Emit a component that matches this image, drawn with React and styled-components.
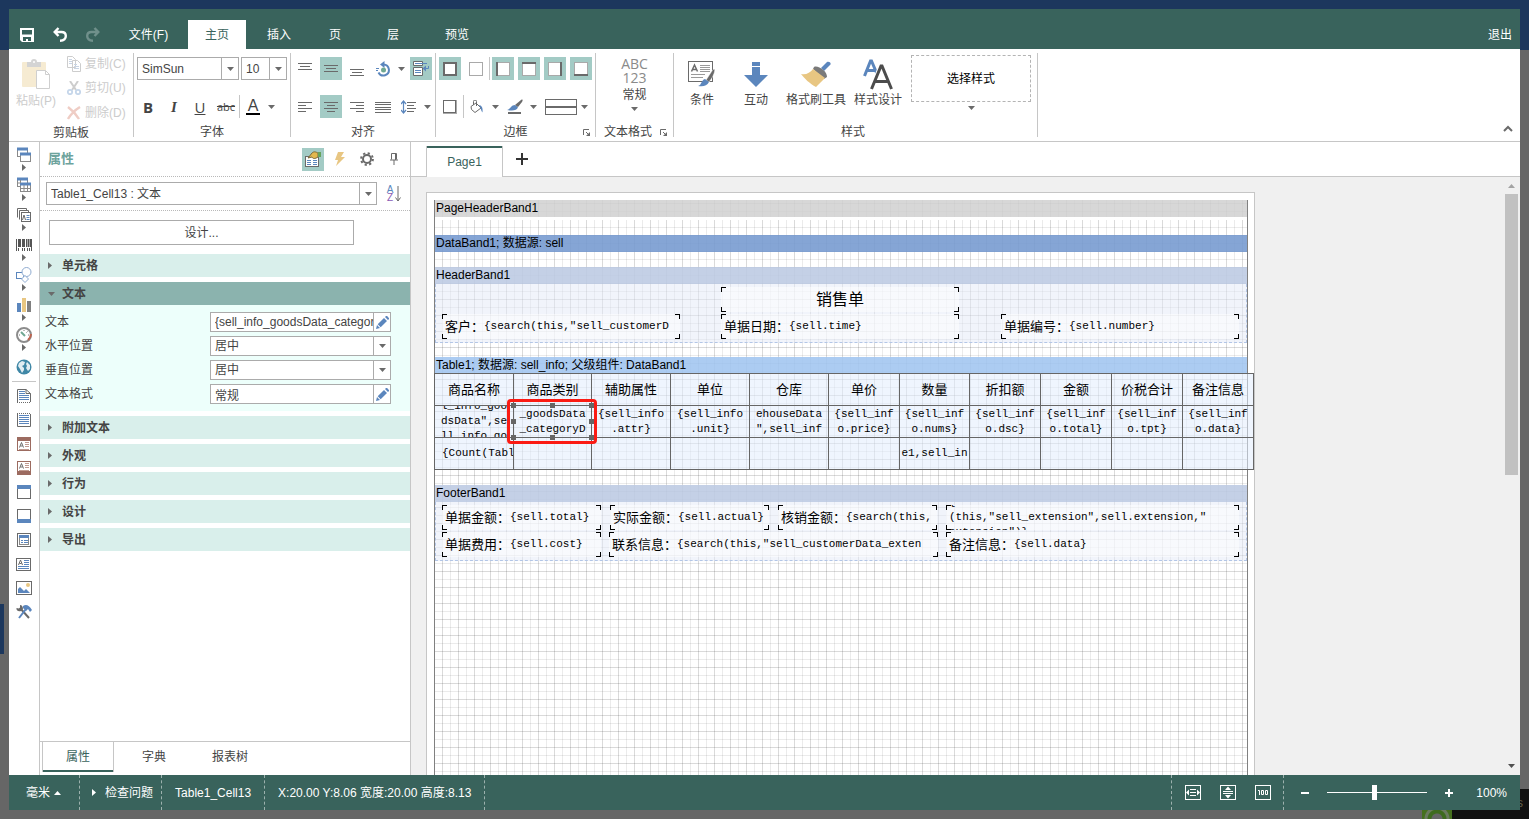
import React from 'react'
import styled, { createGlobalStyle, css } from 'styled-components'

const GREEN = '#39635c'
const ACTIVE = '#a3cbc5'
const LINE = '#c6c6c6'
const INK = '#444444'
const ICON = '#6a6a6a'
const BLUE = '#5b86bd'

/* ---------- icons ---------- */

const Svg = ({ w = 16, h = 16, children }) => (
  <svg width={w} height={h} viewBox={`0 0 ${w} ${h}`} fill="none" aria-hidden="true">
    {children}
  </svg>
)

const Caret = ({ dir = 'down', color = ICON }) => {
  const shape = {
    down: 'M0 0h7L3.500 4z',
    up: 'M0 4h7L3.500 0z',
    right: 'M0 0v7L4 3.500z',
  }[dir]
  const side = dir === 'right'
  return (
    <Svg w={side ? 4 : 7} h={side ? 7 : 4}>
      <path d={shape} fill={color} />
    </Svg>
  )
}

const SaveIcon = () => (
  <Svg w={14} h={14}>
    <path d="M0 0h14v14H2L0 12z" fill="#fff" />
    <path d="M2 2h10v4.500H2zM3 9h8v4H8v-2H6v2H3z" fill={GREEN} />
  </Svg>
)

const UndoIcon = ({ color = '#fff', flip }) => (
  <Svg w={14} h={15}>
    <g transform={flip ? 'translate(14 0) scale(-1 1)' : undefined} stroke={color} strokeWidth="2.400">
      <path d="M5.500 1L1.700 5L5.500 9M2 5H8.500C11.500 5 12.800 7 12.800 9C12.800 11.800 11 13.500 7 13.700" />
    </g>
  </Svg>
)

const PasteIcon = () => (
  <Svg w={28} h={30}>
    <rect y="3" width="24" height="25" rx="1" fill="#f6ebd2" />
    <path d="M5 3h4c0-2 1-3 3-3s3 1 3 3h4v5H5z" fill="#d4d4d4" />
    <circle cx="12" cy="3" r="1" fill="#fff" />
    <path d="M14.500 11.500h9l4 4v14h-13z" fill="#fff" stroke="#cfcfcf" />
    <path d="M23.500 11.500v4h4" stroke="#cfcfcf" />
  </Svg>
)

const CopyIcon = () => (
  <Svg w={14} h={16}>
    <path d="M.5.5h5l3 3v8h-8zM5.500 4.500h5l3 3v8h-8z" fill="#fff" stroke="#cdcdcd" />
    <path d="M2 3.500h3M2 5.500h3M2 7.500h3M7 8.500h3M7 10.500h5M7 12.500h5" stroke="#c8d4e4" />
  </Svg>
)

const CutIcon = () => (
  <Svg w={14} h={14}>
    <path d="M3 0l6 9M11 0L5 9" stroke="#cdcdcd" strokeWidth="2" />
    <circle cx="3" cy="11" r="2.200" stroke="#c5d6ea" strokeWidth="1.800" />
    <circle cx="11" cy="11" r="2.200" stroke="#c5d6ea" strokeWidth="1.800" />
  </Svg>
)

const DeleteIcon = () => (
  <Svg w={14} h={14}>
    <path d="M1 1c4 3 8 7 11 12M13 1C8 4 4 8 1 13" stroke="#efcdc5" strokeWidth="2.400" />
  </Svg>
)

const LinesIcon = ({ rows, h = 14 }) => (
  <Svg w={16} h={h}>
    {rows.map(([x1, x2, y]) => (
      <path key={y} d={`M${x1} ${y + 0.5}H${x2}`} stroke={ICON} />
    ))}
  </Svg>
)

const RotateIcon = () => (
  <Svg w={16} h={16}>
    <path d="M8.500 3.500a5.500 5.500 0 1 1-5 8" stroke={BLUE} strokeWidth="2" />
    <path d="M9.500 0v7L5 3.500z" fill={BLUE} />
    <circle cx="8.500" cy="9" r="2.500" fill="#6fa892" />
    <path d="M1 7.500h3M1 9.500h2" stroke={BLUE} />
  </Svg>
)

const WrapIcon = () => (
  <Svg w={16} h={16}>
    <path d="M.5.500h9v4h-9zM.5 6.500h9v8h-9z" fill="#fff" stroke={ICON} />
    <path d="M2 2.500h12M2 9.500h6M2 11.500h6" stroke={BLUE} />
    <path d="M15.500 5v2.500H11" stroke={BLUE} />
    <path d="M13 4.500v6l-3.500-3z" fill={BLUE} />
  </Svg>
)

const SpacingIcon = () => (
  <Svg w={16} h={14}>
    <path d="M2.500 1v12M0 4l2.500-3L5 4M0 10l2.500 3L5 10" stroke={BLUE} strokeWidth="1.200" />
    <path d="M6 2.500h9M6 5.500h7M6 8.500h9M6 11.500h7" stroke={ICON} />
  </Svg>
)

const BoxIcon = ({ side }) => (
  <Svg w={14} h={14}>
    <rect x=".5" y=".5" width="13" height="13" fill="#fff" stroke={side === 'all' ? ICON : '#a9a9a9'} />
    {side === 'all' && <rect x="1" y="1" width="12" height="12" stroke={ICON} strokeWidth="2" />}
    {side === 'left' && <path d="M1 0v14" stroke={ICON} strokeWidth="2" />}
    {side === 'top' && <path d="M0 1h14" stroke={ICON} strokeWidth="2" />}
    {side === 'right' && <path d="M13 0v14" stroke={ICON} strokeWidth="2" />}
    {side === 'bottom' && <path d="M0 13h14" stroke={ICON} strokeWidth="2" />}
    {side === 'shadow' && (
      <>
        <path d="M1 13h12V1" stroke="#a9a9a9" strokeWidth="2" />
        <rect x=".5" y=".5" width="12" height="12" fill="#fff" stroke={ICON} />
      </>
    )}
  </Svg>
)

const BucketIcon = () => (
  <Svg w={14} h={14}>
    <path d="M1 6.500l5-3.500 5 5-6 4.500-3.500-3zM3.500 5V1.500a1.500 1.500 0 0 1 3 0V6" stroke={ICON} />
    <path d="M9 5c3 .5 4 3 3.500 7.500C11 11 11 9 10.500 8z" fill={BLUE} />
  </Svg>
)

const PenIcon = () => (
  <Svg w={16} h={16}>
    <path d="M0 11c4-1 4-5 8-5l3 2c-1 4-6 4-11 3z" fill={BLUE} />
    <path d="M8 6l6-5c2-1 2 0 1 2l-4 5z" fill={ICON} />
    <path d="M1 14h13" stroke={ICON} strokeWidth="2" />
  </Svg>
)

const LineStyleIcon = () => (
  <Svg w={32} h={16}>
    <rect x=".5" y=".5" width="31" height="15" stroke={ICON} />
    <path d="M0 8h32" stroke={ICON} strokeWidth="2" />
  </Svg>
)

const LauncherIcon = () => (
  <Svg w={7} h={7}>
    <path d="M.5 6V.5H6M3 3l3 3" stroke={ICON} />
    <path d="M7 3v4H3z" fill={ICON} />
  </Svg>
)

const ConditionIcon = () => (
  <Svg w={28} h={28}>
    <rect x=".5" y="1.500" width="24" height="20" fill="#fff" stroke={ICON} />
    <path d="M3.500 11.500L6.500 5l3 6.500M4.500 9.500h4" stroke={ICON} strokeWidth="1.500" />
    <path d="M12 5.500h10M12 7.500h10M12 9.500h10M12 11.500h10M3 14.500h14M3 17.500h12" stroke="#9a9a9a" />
    <path d="M26 9c2 0 0 7-5 13l-3-2c3-4 6-10 8-11z" fill={ICON} stroke="#fff" strokeWidth=".5" />
    <path d="M17 19l4 3c-2 4-6 5-11 4 4-1 3-6 7-7z" fill={BLUE} />
  </Svg>
)

const InteractionIcon = () => (
  <Svg w={24} h={28}>
    <path d="M8 2h8v4H8zM8 7h8v8h8L12 27 0 15h8z" fill={BLUE} />
  </Svg>
)

const BrushIcon = () => (
  <Svg w={30} h={28}>
    <path d="M26 2c2-1 5 1 3 3l-6 6-3-3z" fill={BLUE} />
    <path d="M13 7c4-2 13 4 13 10l-3 2L12 9z" fill="#7a7a7a" />
    <path d="M12 9l12 9-9 9C9 24 3 18 0 14c5 1 9-1 12-5z" fill="#e8c682" />
  </Svg>
)

const StyleIcon = () => (
  <Svg w={30} h={32}>
    <path d="M1.500 18L7.500 3h1l6 14M4 12.500h8" stroke={BLUE} strokeWidth="3" />
    <path d="M8.500 31L18 8h1l9.500 23M12 24h13" stroke="#fff" strokeWidth="5" />
    <path d="M8.500 31L18 8h1l9.500 23M12 23.500h13" stroke="#4c4c4c" strokeWidth="3" />
  </Svg>
)

const Chevron = () => (
  <Svg w={10} h={7}>
    <path d="M1 6l4-4 4 4" stroke={ICON} strokeWidth="2" />
  </Svg>
)

const GridWindow = ({ cells }) => (
  <Svg>
    <rect x="1.500" y="1.500" width="10" height="8" fill="#fff" stroke="#8a8a8a" />
    <path d="M1 2h11" stroke={BLUE} strokeWidth="3" />
    <rect x="4.500" y="6.500" width="10" height="8" fill="#fff" stroke="#8a8a8a" />
    <path d="M4 7h11" stroke={BLUE} strokeWidth="3" />
    {cells && <path d="M1 6h3M4.500 3v3M5 11.500h10M8 8v7M11.500 8v7" stroke="#8a8a8a" />}
  </Svg>
)

const TextDocsIcon = () => (
  <Svg>
    <path d="M1.500 10.500v-9h9v2M3.500 12.500v-9h9v2" fill="#fff" stroke={ICON} />
    <rect x="5.500" y="5.500" width="9" height="9" fill="#fff" stroke={ICON} />
    <path d="M6.500 13l1.500-5 1.500 5" stroke={ICON} />
    <path d="M10.500 8.500h3M10.500 10.500h3M10.500 12.500h3" stroke={BLUE} />
  </Svg>
)

const BarcodeIcon = () => (
  <Svg>
    <path d="M.5 2v12M15.500 2v12" stroke="#555" />
    <path d="M4 2v8M8 2v8M12.500 2v8" stroke="#555" strokeWidth="2" />
    <path d="M2.500 2v8M6.500 2v8M10.500 2v8M14.500 2v8" stroke="#555" />
    <path d="M2 12.500h2M6 12.500h1M8 12.500h2M11 12.500h3" stroke="#555" strokeWidth="3" strokeDasharray="1 1" />
  </Svg>
)

const ShapesIcon = () => (
  <Svg>
    <rect x=".5" y="5.500" width="7" height="6" stroke={BLUE} />
    <circle cx="10.500" cy="5" r="4.500" fill="#fff" stroke="#8fabd0" />
    <path d="M9 8.500l3.500 3.500L9 15.500 5.500 12z" fill="#fff" stroke="#8fabd0" />
  </Svg>
)

const ChartIcon = () => (
  <Svg>
    <path d="M1 6h4v9H1z" fill={BLUE} />
    <path d="M6 1h4v14H6z" fill="#e8c682" />
    <path d="M11 4h4v11h-4z" fill="#808080" />
  </Svg>
)

const GaugeIcon = () => (
  <Svg>
    <circle cx="8" cy="8" r="7" fill="#fff" stroke="#8c8c8c" strokeWidth="2" />
    <path d="M15 7c0 2-1 4-3 6" stroke="#c0644f" strokeWidth="2" />
    <path d="M5 5l4 4" stroke="#6fa892" strokeWidth="2" />
    <path d="M8 3v1M3 8h1M12 8h1M11.500 4.500l-1 1" stroke="#777" />
  </Svg>
)

const GlobeIcon = () => (
  <Svg>
    <circle cx="8" cy="8" r="7.500" fill="#3f87a6" />
    <path d="M3 4l3-2 3 1-1 3-2 1 2 2v2l-2 3-2-4-2-3zM11 3l3 3v4l-2 2-2-3 1-2-1-2z" fill="#fff" opacity=".85" />
  </Svg>
)

const DocIcon = ({ top }) => (
  <Svg>
    <path d={top ? 'M1.500 2v12.500h13V2' : 'M1.500 14V1.500H10l4.500 4V14M10 1.500v4h4.500'} stroke={ICON} />
    <path d={top ? 'M1 1.500h14' : 'M1 14.500h14'} stroke={ICON} strokeDasharray="1 1" />
    <path d={top ? 'M3 3.500h10M3 5.500h10' : 'M3 3.500h6M3 5.500h6'} stroke={BLUE} />
    <path d="M3 7.500h10M3 9.500h10M3 11.500h10" stroke={BLUE} />
  </Svg>
)

const LabelIcon = ({ band }) => (
  <Svg>
    <rect x="1.500" y="1.500" width="13" height="13" fill="#fff" stroke="#9c6b60" />
    {band === 'top' && <path d="M1 3h14" stroke="#9c6b60" strokeWidth="4" />}
    {band === 'bottom' && <path d="M1 13h14" stroke="#9c6b60" strokeWidth="4" />}
    <g transform={band === 'top' ? 'translate(0 3)' : undefined}>
      <path d="M3.500 8.500l2-5 2 5M4.500 7h2" stroke={ICON} />
      <path d="M9 3.500h4M9 5.500h4M9 7.500h4M3 10.500h10" stroke="#c09a90" />
    </g>
  </Svg>
)

const PanelIcon = ({ band }) => (
  <Svg>
    <rect x="1.500" y="1.500" width="13" height="13" fill="#fff" stroke={ICON} />
    <path d={band === 'top' ? 'M1 3h14' : 'M1 13h14'} stroke={BLUE} strokeWidth="4" />
  </Svg>
)

const SubReportIcon = () => (
  <Svg>
    <rect x="1.500" y="1.500" width="13" height="13" stroke={ICON} />
    <rect x="3.500" y="3.500" width="9" height="9" stroke="#8a8a8a" />
    <path d="M3 4.500h10" stroke={BLUE} strokeWidth="3" />
    <path d="M5 8.500h2M8 8.500h4M5 10.500h2M8 10.500h4" stroke={BLUE} />
  </Svg>
)

const TextBoxIcon = () => (
  <Svg>
    <rect x=".5" y="2.500" width="14" height="12" stroke={ICON} />
    <path d="M2.500 9l2-5 2 5M3.500 7.500h2" stroke={ICON} />
    <path d="M8 4.500h5M8 6.500h5M8 8.500h5M2 10.500h11M2 12.500h11" stroke={BLUE} />
  </Svg>
)

const PictureIcon = () => (
  <Svg>
    <rect x=".5" y="1.500" width="15" height="13" stroke={ICON} />
    <path d="M2 13V9l2-2 4 4 2-2 4 4z" fill={BLUE} />
    <circle cx="12" cy="5" r="2" fill="#e8c682" />
  </Svg>
)

const ToolsIcon = () => (
  <Svg>
    <path d="M4 4l9 10" stroke={ICON} strokeWidth="2" />
    <path d="M4 1v2.500L3 4.500.5 4C0 6 2 8 5 7l2-2c0-2-1-4-3-4z" fill={ICON} />
    <path d="M3 14l7-9" stroke={BLUE} strokeWidth="2" />
    <path d="M7 2c3-2 6-1 9 4l-2 2-2-3-2 2-3-3z" fill={BLUE} />
  </Svg>
)

const PropertiesIcon = () => (
  <Svg>
    <rect x=".5" y="5.500" width="13" height="10" fill="#fff" stroke={ICON} />
    <path d="M2 9.500h4M2 11.500h4M2 13.500h4M8 9.500h4M8 11.500h4M8 13.500h4" stroke={BLUE} />
    <path d="M3 7l4-5c2-2 4-1 6 0v4c-3 2-5 2-6 0z" fill="#e3b84e" stroke="#7a6a3c" />
    <path d="M13 1h3v5h-3z" fill="#67a35c" />
  </Svg>
)

const BoltIcon = () => (
  <Svg w={12} h={14}>
    <path d="M4 0h6L7 5h4L2 14l2-6H1z" fill="#e8c682" />
  </Svg>
)

const GearIcon = () => (
  <Svg w={14} h={14}>
    <circle cx="7" cy="7" r="4" stroke={ICON} strokeWidth="2" />
    <circle cx="7" cy="7" r="5.900" stroke={ICON} strokeWidth="2" strokeDasharray="2.200 2.430" />
  </Svg>
)

const PinIcon = () => (
  <Svg w={8} h={12}>
    <path d="M1.500 6.500v-6h5v6M0 7h8M4 7v5M5.500 1v6" stroke={ICON} />
  </Svg>
)

const SortArrow = () => (
  <Svg w={6} h={16}>
    <path d="M3 0v15M.5 11.500L3 15l2.500-3.500" stroke={ICON} />
  </Svg>
)

const PencilIcon = () => (
  <Svg w={13} h={13}>
    <path d="M0 13l1-4 3 3zM1.700 8.300L8 2l3 3-6.300 6.300zM9 1l1-1c1-.5 3.500 2 3 3l-1 1z" fill={BLUE} />
  </Svg>
)

const ZoomIcon = ({ kind }) => (
  <Svg w={16} h={15}>
    <rect x=".5" y=".5" width="15" height="14" stroke="#fff" />
    {kind === 'width' && <path d="M5 4.500h6M5 7.500h6M5 10.500h6" stroke="#fff" />}
    {kind === 'width' && <path d="M1 7.500l3-3v6zM15 7.500l-3-3v6z" fill="#fff" />}
    {kind === 'height' && <path d="M3 6.500h10M3 8.500h10" stroke="#fff" />}
    {kind === 'height' && <path d="M8 1.500l3 3.500H5zM8 13.500l3-3.500H5z" fill="#fff" />}
    {kind === 'full' && <path d="M3 5.500h1.500V10M6.500 5.500h2v4h-2zM10.500 5.500h2v4h-2z" stroke="#fff" />}
  </Svg>
)

/* ---------- data ---------- */

const MENU = [
  { text: '主页', width: 58, active: true },
  { text: '插入', width: 66 },
  { text: '页', width: 46 },
  { text: '层', width: 70 },
  { text: '预览', width: 58 },
]

const INSERT_TOOLS = [
  { name: '区域', icon: <GridWindow /> },
  { name: '交叉区域', icon: <GridWindow cells /> },
  { name: '组件', icon: <TextDocsIcon /> },
  { name: '条形码', icon: <BarcodeIcon /> },
  { name: '形状', icon: <ShapesIcon /> },
  { name: '图表', icon: <ChartIcon /> },
  { name: '仪表', icon: <GaugeIcon /> },
]

const BAND_TOOLS = [
  { name: '报表标题', icon: <DocIcon /> },
  { name: '报表汇总', icon: <DocIcon top /> },
  { name: '页眉', icon: <LabelIcon band="top" /> },
  { name: '页脚', icon: <LabelIcon band="bottom" /> },
  { name: '标题', icon: <PanelIcon band="top" /> },
  { name: '尾部', icon: <PanelIcon band="bottom" /> },
  { name: '数据', icon: <SubReportIcon /> },
  { name: '文本', icon: <TextBoxIcon /> },
  { name: '图像', icon: <PictureIcon /> },
  { name: '设置工具箱', icon: <ToolsIcon /> },
]

const FIELDS = [
  { id: 'text', label: '文本', value: '{sell_info_goodsData_categoryData}', edit: true },
  { id: 'hor', label: '水平位置', value: '居中' },
  { id: 'ver', label: '垂直位置', value: '居中' },
  { id: 'format', label: '文本格式', value: '常规', edit: true },
]

const COLUMNS = [
  { width: 79, head: '商品名称', lines: ['l_info_goo', 'dsData",se', 'll_info_go'], total: '{Count(Tabl' },
  { width: 78, head: '商品类别', lines: ['_goodsData', '_categoryD'], selected: true },
  { width: 79, head: '辅助属性', lines: ['{sell_info', '.attr}'] },
  { width: 79, head: '单位', lines: ['{sell_info', '.unit}'] },
  { width: 79, head: '仓库', lines: ['ehouseData', '",sell_inf'] },
  { width: 71, head: '单价', lines: ['{sell_inf', 'o.price}'] },
  { width: 70, head: '数量', lines: ['{sell_inf', 'o.nums}'], total: 'e1,sell_in' },
  { width: 71, head: '折扣额', lines: ['{sell_inf', 'o.dsc}'] },
  { width: 71, head: '金额', lines: ['{sell_inf', 'o.total}'] },
  { width: 71, head: '价税合计', lines: ['{sell_inf', 'o.tpt}'] },
  { width: 71, head: '备注信息', lines: ['{sell_inf', 'o.data}'] },
]

const HEADER_BOXES = [
  { x: 285, y: 3, w: 238, title: '销售单' },
  { x: 6, y: 30, w: 238, label: '客户：', code: '{search(this,"sell_customerD' },
  { x: 285, y: 30, w: 238, label: '单据日期：', code: '{sell.time}' },
  { x: 565, y: 30, w: 238, label: '单据编号：', code: '{sell.number}' },
]

const FOOTER_BOXES = [
  { x: 6, y: 3, w: 159, label: '单据金额：', code: '{sell.total}' },
  { x: 174, y: 3, w: 159, label: '实际金额：', code: '{sell.actual}' },
  { x: 342, y: 3, w: 159, label: '核销金额：', code: '{search(this,' },
  { x: 510, y: 3, w: 293, lines: ['{search', '(this,"sell_extension",sell.extension,"', 'extension")}'] },
  { x: 6, y: 30, w: 159, label: '单据费用：', code: '{sell.cost}' },
  { x: 173, y: 30, w: 329, label: '联系信息：', code: '{search(this,"sell_customerData_exten' },
  { x: 510, y: 30, w: 293, label: '备注信息：', code: '{sell.data}' },
]

/* ---------- app ---------- */

const TableCell = ({ lines }) => (
  <CellText>
    {lines.map(line => (
      <Code key={line}>{line}</Code>
    ))}
  </CellText>
)

const Boxes = ({ items }) =>
  items.map(({ x, y, w, title, label, code, lines }) => (
    <TextBox key={`${x}-${y}`} $x={x} $y={y} $w={w} $center={!!title}>
      {title && <ReportTitle>{title}</ReportTitle>}
      {label && <span>{label}</span>}
      {code && <Code>{code}</Code>}
      {lines && (
        <CodeLines>
          {lines.map(line => (
            <Code key={line}>{line}</Code>
          ))}
        </CodeLines>
      )}
    </TextBox>
  ))

const Picker = ({ label, value, id, width, height }) => (
  <Field $width={width} $height={height}>
    <FieldSelect id={id} aria-label={label} defaultValue={value}>
      <option>{value}</option>
    </FieldSelect>
    <FieldMark>
      <Caret />
    </FieldMark>
  </Field>
)

const Drop = ({ label, children }) => (
  <DropButton aria-label={label}>
    <DropIcon>{children}</DropIcon>
    <Caret />
  </DropButton>
)

const Ribbon = () => (
  <RibbonBar>
    <Group $pad="0">
      <Clipboard>
        <PasteButton disabled>
          <PasteIcon />
          粘贴(P)
        </PasteButton>
        <ClipboardList>
          <SmallButton disabled>
            <CopyIcon />
            复制(C)
          </SmallButton>
          <SmallButton disabled>
            <CutIcon />
            剪切(U)
          </SmallButton>
          <SmallButton disabled>
            <DeleteIcon />
            删除(D)
          </SmallButton>
        </ClipboardList>
      </Clipboard>
      <Caption>剪贴板</Caption>
    </Group>

    <Group>
      <Row $gap={2}>
        <Picker label="字体" value="SimSun" width={102} />
        <Picker label="字号" value="10" width={46} />
      </Row>
      <Row>
        <ToolButton aria-label="粗体">
          <Glyph $bold>B</Glyph>
        </ToolButton>
        <ToolButton aria-label="斜体">
          <Glyph $bold $italic>
            I
          </Glyph>
        </ToolButton>
        <ToolButton aria-label="下划线">
          <Glyph $line="underline">U</Glyph>
        </ToolButton>
        <ToolButton aria-label="删除线">
          <Glyph $small $line="line-through">
            abc
          </Glyph>
        </ToolButton>
        <Divider />
        <Drop label="字体颜色">
          <ColorGlyph>A</ColorGlyph>
        </Drop>
      </Row>
      <Caption>字体</Caption>
    </Group>

    <Group>
      <Row>
        <ToolButton aria-label="顶端对齐">
          <LinesIcon rows={[[1, 15, 1], [3, 13, 4], [1, 15, 7]]} />
        </ToolButton>
        <ToolButton aria-label="垂直居中" $active>
          <LinesIcon rows={[[1, 15, 3], [3, 13, 6], [1, 15, 9]]} />
        </ToolButton>
        <ToolButton aria-label="底端对齐">
          <LinesIcon rows={[[1, 15, 7], [3, 13, 10], [1, 15, 13]]} />
        </ToolButton>
        <Drop label="角度">
          <RotateIcon />
        </Drop>
        <ToolButton aria-label="自动换行" $active>
          <WrapIcon />
        </ToolButton>
      </Row>
      <Row>
        <ToolButton aria-label="左对齐">
          <LinesIcon rows={[[1, 15, 2], [1, 9, 5], [1, 15, 8], [1, 9, 11]]} />
        </ToolButton>
        <ToolButton aria-label="居中" $active>
          <LinesIcon rows={[[1, 15, 2], [4, 12, 5], [1, 15, 8], [4, 12, 11]]} />
        </ToolButton>
        <ToolButton aria-label="右对齐">
          <LinesIcon rows={[[1, 15, 2], [7, 15, 5], [1, 15, 8], [7, 15, 11]]} />
        </ToolButton>
        <ToolButton aria-label="两端对齐">
          <LinesIcon rows={[[0, 16, 2], [0, 16, 4], [0, 16, 7], [0, 16, 9], [0, 16, 12]]} />
        </ToolButton>
        <Drop label="行距">
          <SpacingIcon />
        </Drop>
      </Row>
      <Caption>对齐</Caption>
    </Group>

    <Group>
      <Row>
        <ToolButton aria-label="全部边框" $active>
          <BoxIcon side="all" />
        </ToolButton>
        <ToolButton aria-label="无边框">
          <BoxIcon />
        </ToolButton>
        <Divider />
        {['left', 'top', 'right', 'bottom'].map(side => (
          <ToolButton key={side} aria-label={side} $active>
            <BoxIcon side={side} />
          </ToolButton>
        ))}
      </Row>
      <Row>
        <ToolButton aria-label="阴影">
          <BoxIcon side="shadow" />
        </ToolButton>
        <Divider />
        <Drop label="背景">
          <BucketIcon />
        </Drop>
        <Drop label="边框颜色">
          <PenIcon />
        </Drop>
        <DropButton aria-label="线型" $wide>
          <LineStyleIcon />
          <Caret />
        </DropButton>
      </Row>
      <Caption>
        边框
        <Launcher aria-label="边框设置">
          <LauncherIcon />
        </Launcher>
      </Caption>
    </Group>

    <Group $pad="0 4px">
      <FormatButton>
        <FormatSample>ABC</FormatSample>
        <FormatSample>123</FormatSample>
        <FormatName>常规</FormatName>
        <Caret />
      </FormatButton>
      <Caption $left>
        文本格式
        <Launcher aria-label="文本格式设置">
          <LauncherIcon />
        </Launcher>
      </Caption>
    </Group>

    <Group $pad="0 6px 0 1px">
      <StyleRow>
        <BigButton $width={54}>
          <BigIcon>
            <ConditionIcon />
          </BigIcon>
          条件
        </BigButton>
        <BigButton $width={54}>
          <BigIcon>
            <InteractionIcon />
          </BigIcon>
          互动
        </BigButton>
        <BigButton $width={66}>
          <BigIcon>
            <BrushIcon />
          </BigIcon>
          格式刷工具
        </BigButton>
        <BigButton $width={58}>
          <BigIcon>
            <StyleIcon />
          </BigIcon>
          样式设计
        </BigButton>
        <StylePicker>
          <StyleBox>选择样式</StyleBox>
          <Caret />
        </StylePicker>
      </StyleRow>
      <Caption>样式</Caption>
    </Group>

    <Collapse aria-label="折叠功能区">
      <Chevron />
    </Collapse>
  </RibbonBar>
)

const Properties = () => (
  <Panel>
    <PanelHead>
      <PanelTitle>属性</PanelTitle>
      <ToolButton aria-label="属性" $active>
        <PropertiesIcon />
      </ToolButton>
      <ToolButton aria-label="事件">
        <BoltIcon />
      </ToolButton>
      <ToolButton aria-label="设置">
        <GearIcon />
      </ToolButton>
      <ToolButton aria-label="固定">
        <PinIcon />
      </ToolButton>
    </PanelHead>
    <ObjectRow>
      <Picker label="组件" value="Table1_Cell13 : 文本" />
      <SortButton aria-label="按字母排序">
        <SortLetters>
          <span>A</span>
          <b>Z</b>
        </SortLetters>
        <SortArrow />
      </SortButton>
    </ObjectRow>
    <DesignButton>设计...</DesignButton>
    <Sections>
      <Section>
        <Caret dir="right" />
        单元格
      </Section>
      <div>
        <Section $open>
          <Caret />
          文本
        </Section>
        <FieldGrid>
          {FIELDS.map(({ id, label, value, edit }) => (
            <React.Fragment key={id}>
              <label htmlFor={id}>{label}</label>
              {edit ? (
                <Field $height={20}>
                  <FieldInput id={id} defaultValue={value} />
                  <FieldEdit aria-label={`编辑${label}`}>
                    <PencilIcon />
                  </FieldEdit>
                </Field>
              ) : (
                <Picker id={id} value={value} height={20} />
              )}
            </React.Fragment>
          ))}
        </FieldGrid>
      </div>
      {['附加文本', '外观', '行为', '设计', '导出'].map(name => (
        <Section key={name}>
          <Caret dir="right" />
          {name}
        </Section>
      ))}
    </Sections>
    <PanelTabs>
      <PanelTab $active>属性</PanelTab>
      <PanelTab>字典</PanelTab>
      <PanelTab>报表树</PanelTab>
    </PanelTabs>
  </Panel>
)

const Report = () => (
  <Paper>
    <Sheet>
      <Band $gap={18}>
        <BandName $tone="gray">PageHeaderBand1</BandName>
        <WhiteGap />
      </Band>
      <Band $gap={15}>
        <BandName $tone="data">DataBand1; 数据源: sell</BandName>
      </Band>
      <Band $gap={14}>
        <BandName $tone="header">HeaderBand1</BandName>
        <BandBody>
          <Boxes items={HEADER_BOXES} />
        </BandBody>
      </Band>
      <Band $gap={15}>
        <BandName $tone="table">Table1; 数据源: sell_info; 父级组件: DataBand1</BandName>
        <ReportTable>
          <colgroup>
            {COLUMNS.map(({ head, width }) => (
              <col key={head} width={width} />
            ))}
          </colgroup>
          <thead>
            <tr>
              {COLUMNS.map(({ head }) => (
                <th key={head}>{head}</th>
              ))}
            </tr>
          </thead>
          <tbody>
            <tr>
              {COLUMNS.map(({ head, lines, selected }) => (
                <td key={head}>
                  <TableCell lines={lines} />
                  {selected && (
                    <>
                      <Highlight />
                      <Handles>
                        {[0, 1, 2, 3, 4, 5, 6, 7, 8].map(n => (
                          <Handle key={n} $hidden={n === 4} />
                        ))}
                      </Handles>
                    </>
                  )}
                </td>
              ))}
            </tr>
            <tr>
              {COLUMNS.map(({ head, total }, i) => (
                <td key={head}>
                  <CellText $start={i === 0 ? 7 : undefined}>{total && <Code>{total}</Code>}</CellText>
                </td>
              ))}
            </tr>
          </tbody>
        </ReportTable>
      </Band>
      <Band $gap={0}>
        <BandName $tone="header">FooterBand1</BandName>
        <BandBody>
          <Boxes items={FOOTER_BOXES} />
        </BandBody>
      </Band>
    </Sheet>
  </Paper>
)

const App = () => (
  <Backdrop>
    <GlobalStyle />
    <SideMark />
    <Dock>
      <DockIcon />
      <DockText>s</DockText>
    </Dock>
    <Window>
      <TitleBar>
        <QuickButton aria-label="保存">
          <SaveIcon />
        </QuickButton>
        <QuickButton aria-label="撤销">
          <UndoIcon />
        </QuickButton>
        <QuickButton aria-label="重做">
          <UndoIcon color="#70908b" flip />
        </QuickButton>
        <MenuTab $width={79}>文件(F)</MenuTab>
        {MENU.map(({ text, width, active }) => (
          <MenuTab key={text} $width={width} $active={active}>
            {text}
          </MenuTab>
        ))}
        <Exit>退出</Exit>
      </TitleBar>
      <Ribbon />
      <Main>
        <Toolbox>
          {INSERT_TOOLS.map(({ name, icon }) => (
            <ToolItem key={name} aria-label={name} $height={30}>
              {icon}
              <Caret dir="right" />
            </ToolItem>
          ))}
          <ToolItem aria-label="地图" $height={26}>
            <GlobeIcon />
          </ToolItem>
          <ToolLine />
          {BAND_TOOLS.map(({ name, icon }) => (
            <ToolItem key={name} aria-label={name} $height={24}>
              {icon}
            </ToolItem>
          ))}
        </Toolbox>
        <Properties />
        <Designer>
          <PageTabs>
            <PageTab>Page1</PageTab>
            <AddPage aria-label="添加页">
              <Svg w={12} h={12}>
                <path d="M6 0v12M0 6h12" stroke="#333" strokeWidth="2" />
              </Svg>
            </AddPage>
          </PageTabs>
          <Canvas>
            <Report />
            <ScrollBar>
              <Caret dir="up" color="#a3a3a3" />
              <ScrollThumb />
              <Caret color="#505050" />
            </ScrollBar>
          </Canvas>
        </Designer>
      </Main>
      <StatusBar>
        <StatusButton $pad="0 18px 0 17px" $gap={4}>
          毫米
          <Caret dir="up" color="#fff" />
        </StatusButton>
        <StatusButton $pad="0 8px 0 12px" $gap={9}>
          <Caret dir="right" color="#fff" />
          检查问题
        </StatusButton>
        <StatusText>Table1_Cell13</StatusText>
        <StatusText>X:20.00 Y:8.06 宽度:20.00 高度:8.13</StatusText>
        <ZoomModes>
          <ZoomMode aria-label="页宽">
            <ZoomIcon kind="width" />
          </ZoomMode>
          <ZoomMode aria-label="整页">
            <ZoomIcon kind="height" />
          </ZoomMode>
          <ZoomMode aria-label="实际大小">
            <ZoomIcon kind="full" />
          </ZoomMode>
        </ZoomModes>
        <ZoomControl>
          <ZoomStep aria-label="缩小">
            <Svg w={8} h={8}>
              <path d="M0 4h8" stroke="#fff" strokeWidth="2" />
            </Svg>
          </ZoomStep>
          <ZoomRange type="range" aria-label="缩放" min="0" max="100" defaultValue="47" />
          <ZoomStep aria-label="放大">
            <Svg w={8} h={8}>
              <path d="M0 4h8M4 0v8" stroke="#fff" strokeWidth="2" />
            </Svg>
          </ZoomStep>
          <ZoomValue>100%</ZoomValue>
        </ZoomControl>
      </StatusBar>
    </Window>
  </Backdrop>
)

export default App

/* ---------- styles ---------- */

const GlobalStyle = createGlobalStyle`
  * {
    box-sizing: border-box;
  }

  body {
    margin: 0;
    overflow: hidden;
    color: ${INK};
    font: 12px/16px 'Liberation Sans', 'Noto Sans CJK SC', sans-serif;
  }

  button, input, select {
    margin: 0;
    padding: 0;
    border: 0;
    border-radius: 0;
    background: none;
    color: inherit;
    font: inherit;
  }

  svg {
    display: block;
    flex: none;
  }
`

const Backdrop = styled.div`
  position: relative;
  height: 100vh;
  padding: 9px;
  background: linear-gradient(#1c375d 50px, #666666 50px);
`

const SideMark = styled.div`
  position: absolute;
  top: 604px;
  left: 0;
  width: 4px;
  height: 50px;
  background: #1c375d;
`

const Dock = styled.div`
  position: absolute;
  right: 0;
  bottom: 0;
  display: flex;
  width: 107px;
  height: 30px;
`

const DockIcon = styled.div`
  width: 30px;
  background: radial-gradient(circle at 50% 100%, #666666 5px, #3f6b1f 6px 9px, #6b7a60 10px 12px, #46701f 13px);
`

const DockText = styled.div`
  flex: 1;
  padding: 6px 6px 0 0;
  background: #111111;
  color: #66604a;
  text-align: right;
`

const Window = styled.div`
  position: relative;
  display: flex;
  flex-direction: column;
  height: 100%;
  background: #ffffff;
`

const center = css`
  display: flex;
  align-items: center;
  justify-content: center;
`

const TitleBar = styled.header`
  display: flex;
  align-items: flex-end;
  height: 40px;
  padding: 0 8px 0 1px;
  background: ${GREEN};
  color: #ffffff;
`

const QuickButton = styled.button`
  ${center}
  width: 33px;
  height: 29px;
`

const MenuTab = styled.button`
  width: ${p => p.$width}px;
  height: 29px;
  background: ${p => (p.$active ? '#ffffff' : 'none')};
  color: ${p => (p.$active ? GREEN : '#ffffff')};
`

const Exit = styled.button`
  height: 29px;
  margin-left: auto;
`

const RibbonBar = styled.div`
  display: flex;
  flex: none;
  padding: 4px 0;
  border-bottom: 1px solid ${LINE};
`

const Group = styled.section`
  display: flex;
  flex-direction: column;
  height: 84px;
  padding: ${p => p.$pad || '4px 3px 0'};
  border-right: 1px solid ${LINE};
`

const Row = styled.div`
  display: flex;
  gap: ${p => p.$gap || 4}px;
  height: 23px;

  & + & {
    margin-top: 15px;
  }
`

const Caption = styled.div`
  position: relative;
  margin: auto 0 -3px;
  padding-left: ${p => (p.$left ? '4px' : '0')};
  text-align: ${p => (p.$left ? 'left' : 'center')};
`

const Launcher = styled.button`
  position: absolute;
  right: 2px;
  bottom: 4px;
`

const Divider = styled.span`
  width: 1px;
  margin: 0 -2px;
  background: ${LINE};
`

const ToolButton = styled.button`
  ${center}
  width: 22px;
  height: 23px;
  background: ${p => (p.$active ? ACTIVE : 'none')};
`

const DropButton = styled.button`
  display: flex;
  align-items: center;
  justify-content: space-between;
  width: ${p => (p.$wide ? '47px' : '34px')};
  padding: 0 1px 0 ${p => (p.$wide ? '3px' : '0')};
`

const DropIcon = styled.span`
  ${center}
  width: 22px;
`

const Glyph = styled.span`
  color: ${INK};
  font-family: ${p => (p.$italic ? "'Liberation Serif', serif" : "'Open Sans', sans-serif")};
  font-size: ${p => (p.$small ? '11px' : '15px')};
  font-weight: ${p => (p.$bold ? 700 : 400)};
  font-style: ${p => (p.$italic ? 'italic' : 'normal')};
  text-decoration: ${p => p.$line || 'none'};
`

const ColorGlyph = styled.span`
  width: 14px;
  border-bottom: 2px solid #000000;
  font-size: 16px;
  line-height: 15px;
`

const Clipboard = styled.div`
  display: flex;
  width: 124px;
`

const PasteButton = styled.button`
  display: flex;
  flex-direction: column;
  align-items: center;
  gap: 4px;
  width: 54px;
  padding-top: 6px;
  color: #cccccc;
`

const ClipboardList = styled.div`
  display: flex;
  flex-direction: column;
  padding-left: 4px;
`

const SmallButton = styled.button`
  display: flex;
  align-items: center;
  gap: 4px;
  height: 25px;
  color: #cccccc;

  &:first-child {
    height: 22px;
  }
`

const Field = styled.div`
  display: flex;
  flex: ${p => (p.$width ? 'none' : '1')};
  width: ${p => (p.$width ? `${p.$width}px` : 'auto')};
  height: ${p => p.$height || 23}px;
  min-width: 0;
  border: 1px solid #ababab;
  background: #ffffff;
`

const fieldControl = css`
  flex: 1;
  min-width: 0;
  height: 100%;
  padding: 0 0 0 4px;
  outline: none;
`

const FieldSelect = styled.select`
  ${fieldControl}
  appearance: none;
`

const FieldInput = styled.input`
  ${fieldControl}
`

const FieldMark = styled.span`
  ${center}
  width: 17px;
  border-left: 1px solid #ababab;
  pointer-events: none;
`

const FieldEdit = styled.button`
  ${center}
  width: 17px;
  border-left: 1px solid #ababab;
`

const FormatButton = styled.button`
  display: flex;
  flex-direction: column;
  align-items: center;
  width: 69px;
  padding-top: 4px;
`

const FormatSample = styled.span`
  color: #8a8a8a;
  font: 14px/14px 'Open Sans', sans-serif;
`

const FormatName = styled.span`
  margin: 2px 0 4px;
`

const StyleRow = styled.div`
  display: flex;
`

const BigButton = styled.button`
  display: flex;
  flex-direction: column;
  align-items: center;
  gap: 1px;
  width: ${p => p.$width}px;
  padding-top: 4px;
  white-space: nowrap;
`

const BigIcon = styled.span`
  ${center}
  height: 34px;
`

const StylePicker = styled.button`
  display: flex;
  flex-direction: column;
  align-items: center;
  gap: 4px;
  margin-left: 4px;
  padding-top: 2px;
  color: #000000;
`

const StyleBox = styled.span`
  ${center}
  width: 120px;
  height: 47px;
  border: 1px dashed #b4b4b4;
`

const Collapse = styled.button`
  align-self: flex-end;
  margin: 0 7px 5px auto;
`

const Main = styled.main`
  display: flex;
  flex: 1;
  min-height: 0;
`

const Toolbox = styled.nav`
  width: 31px;
  padding-top: 2px;
  border-right: 1px solid ${LINE};
`

const ToolItem = styled.button`
  ${center}
  flex-direction: column;
  gap: 1px;
  width: 30px;
  height: ${p => p.$height}px;
`

const ToolLine = styled.div`
  height: 1px;
  margin: 1px 3px 2px;
  background: ${LINE};
`

const Panel = styled.aside`
  display: flex;
  flex-direction: column;
  width: 371px;
  border-right: 1px solid ${LINE};
`

const PanelHead = styled.div`
  display: flex;
  align-items: center;
  gap: 5px;
  height: 35px;
  padding: 0 5px 0 8px;
  border-bottom: 1px dotted #b9b9b9;
`

const PanelTitle = styled.h2`
  flex: 1;
  margin: 0;
  color: #6da39c;
  font-size: 13px;
`

const ObjectRow = styled.div`
  display: flex;
  gap: 6px;
  padding: 5px 5px 5px 6px;
  border-bottom: 1px dotted #b9b9b9;
`

const SortButton = styled.button`
  ${center}
  gap: 2px;
  width: 22px;
`

const SortLetters = styled.span`
  display: flex;
  flex-direction: column;
  color: ${BLUE};
  font-size: 10px;
  line-height: 8px;
  & > b {
    color: #8a5bb5;
    font-weight: 400;
  }
`

const DesignButton = styled.button`
  height: 25px;
  margin: 9px 56px 9px 9px;
  border: 1px solid #ababab;
`

const Sections = styled.div`
  display: flex;
  flex: 1;
  flex-direction: column;
  gap: 5px;
`

const Section = styled.button`
  display: grid;
  grid-template-columns: 14px 1fr;
  align-items: center;
  width: 100%;
  height: 23px;
  padding-left: 8px;
  background: ${p => (p.$open ? '#8bb3ae' : '#d9efeb')};
  font-weight: 700;
  text-align: left;
`

const FieldGrid = styled.div`
  display: grid;
  grid-template-columns: 165px 1fr;
  align-items: center;
  row-gap: 4px;
  padding: 7px 19px 7px 5px;
  background: #edfffb;
`

const PanelTabs = styled.div`
  display: flex;
  gap: 4px;
  height: 34px;
  padding-left: 2px;
  border-top: 1px solid ${LINE};
`

const PanelTab = styled.button`
  width: 72px;
  height: 30px;
  ${p =>
    p.$active &&
    css`
      border: solid ${LINE};
      border-width: 0 1px;
      box-shadow: inset 0 -2px ${GREEN};
      color: ${GREEN};
    `}
`

const Designer = styled.section`
  display: flex;
  flex: 1;
  flex-direction: column;
  min-width: 0;
`

const PageTabs = styled.div`
  display: flex;
  height: 35px;
  padding: 4px 0 0 15px;
  border-bottom: 1px solid ${LINE};
`

const PageTab = styled.button`
  width: 77px;
  height: 31px;
  border: solid ${LINE};
  border-width: 0 1px;
  background: #ffffff;
  box-shadow: inset 0 2px ${GREEN};
  color: ${GREEN};
`

const AddPage = styled.button`
  ${center}
  width: 38px;
  height: 26px;
`

const Canvas = styled.div`
  display: flex;
  flex: 1;
  justify-content: space-between;
  min-height: 0;
  padding-left: 15px;
  background: #f0f0f0;
`

const Paper = styled.div`
  flex: none;
  width: 829px;
  margin-top: 15px;
  padding: 7px 6px 0 7px;
  border: solid ${LINE};
  border-width: 1px 1px 0;
  background: #ffffff;
`

const Sheet = styled.div`
  display: flex;
  flex-direction: column;
  height: 100%;
  border: solid #808080;
  border-width: 0 1px;
  background-image: linear-gradient(90deg, rgba(0, 0, 0, 0.07) 1px, transparent 1px),
    linear-gradient(rgba(0, 0, 0, 0.07) 1px, transparent 1px),
    linear-gradient(90deg, rgba(0, 0, 0, 0.08) 1px, transparent 1px),
    linear-gradient(rgba(0, 0, 0, 0.08) 1px, transparent 1px);
  background-position: 7px 3px;
  background-size: 16px 16px, 16px 16px, 8px 8px, 8px 8px;
`

const Band = styled.div`
  margin-bottom: ${p => p.$gap}px;
`

const tones = {
  gray: 'rgba(208, 208, 208, 0.85)',
  data: 'rgba(116, 153, 207, 0.88)',
  header: 'rgba(188, 202, 227, 0.88)',
  table: 'rgba(160, 197, 240, 0.88)',
}

const BandName = styled.div`
  height: 17px;
  padding-left: 1px;
  background: ${p => tones[p.$tone]};
  color: #000000;
  line-height: 17px;
`

const WhiteGap = styled.div`
  height: 3px;
  margin-bottom: -3px;
  background: #ffffff;
`

const BandBody = styled.div`
  position: relative;
  height: 59px;
  border: dashed #b3c6e6;
  border-width: 0 1px 1px;
  background: rgba(228, 234, 248, 0.5);
`

const corner = (x, y) => `linear-gradient(#000, #000) ${x} ${y} / 5px 1px, linear-gradient(#000, #000) ${x} ${y} / 1px 5px`

const TextBox = styled.div`
  position: absolute;
  top: ${p => p.$y}px;
  left: ${p => p.$x}px;
  display: flex;
  align-items: center;
  justify-content: ${p => (p.$center ? 'center' : 'flex-start')};
  width: ${p => p.$w}px;
  height: 25px;
  padding-left: ${p => (p.$center ? '0' : '3px')};
  overflow: hidden;
  background: ${corner('left', 'top')}, ${corner('right', 'top')}, ${corner('left', 'bottom')},
    ${corner('right', 'bottom')}, linear-gradient(rgba(255, 255, 255, 0.5), rgba(255, 255, 255, 0.5));
  background-repeat: no-repeat;
  color: #000000;
  font-size: 13px;
  white-space: pre;
`

const ReportTitle = styled.span`
  font-size: 16px;
`

const Code = styled.span`
  font: 11px/15px 'Liberation Mono', monospace;
  white-space: pre;
`

const CodeLines = styled.span`
  display: flex;
  flex-direction: column;
`

const ReportTable = styled.table`
  position: relative;
  width: 820px;
  margin: -1px 0 0 -1px;
  border-collapse: collapse;
  table-layout: fixed;
  background: rgba(226, 237, 254, 0.55);
  color: #000000;

  th,
  td {
    position: relative;
    height: 32px;
    padding: 0;
    border: 1px solid #666666;
    font-size: 13px;
    font-weight: 400;
    white-space: nowrap;
  }
`

const CellText = styled.div`
  display: flex;
  flex-direction: column;
  align-items: ${p => (p.$start ? 'flex-start' : 'center')};
  justify-content: center;
  height: 31px;
  padding-left: ${p => p.$start || 0}px;
  overflow: hidden;
`

const Highlight = styled.div`
  position: absolute;
  z-index: 1;
  inset: -7px -6px -7px -7px;
  border: 3px solid #fb1b14;
  border-radius: 4px;
`

const Handles = styled.div`
  position: absolute;
  z-index: 2;
  inset: -3px;
  display: grid;
  grid-template-columns: repeat(3, 5px);
  align-content: space-between;
  justify-content: space-between;
`

const Handle = styled.span`
  height: 5px;
  background: #666666;
  visibility: ${p => (p.$hidden ? 'hidden' : 'visible')};
`

const ScrollBar = styled.div`
  display: flex;
  flex-direction: column;
  align-items: center;
  width: 13px;
  margin-right: 2px;
  padding: 7px 0;
`

const ScrollThumb = styled.div`
  width: 13px;
  height: 281px;
  margin: 6px 0 auto;
  background: #c1c1c1;
`

const StatusBar = styled.footer`
  display: flex;
  height: 35px;
  background: ${GREEN};
  color: #ffffff;
`

const StatusButton = styled.button`
  display: flex;
  align-items: center;
  gap: ${p => p.$gap}px;
  padding: ${p => p.$pad};
  border-right: 1px dashed #9cb1ad;
`

const StatusText = styled.span`
  display: flex;
  align-items: center;
  padding: 0 13px;
  border-right: 1px dashed #9cb1ad;
`

const ZoomModes = styled.div`
  display: flex;
  margin-left: auto;
  padding: 0 3px;
  border: dashed #9cb1ad;
  border-width: 0 1px;
`

const ZoomMode = styled.button`
  ${center}
  width: 35px;
`

const ZoomControl = styled.div`
  display: flex;
  align-items: center;
  padding: 0 13px 0 10px;
`

const ZoomStep = styled.button`
  ${center}
  width: 22px;
  height: 22px;
`

const ZoomRange = styled.input`
  width: 100px;
  height: 15px;
  margin: 0 11px;
  appearance: none;
  background: linear-gradient(#ffffff, #ffffff) center / 100% 1px no-repeat;

  &::-webkit-slider-thumb {
    width: 5px;
    height: 15px;
    appearance: none;
    background: #ffffff;
  }
`

const ZoomValue = styled.span`
  margin-left: 16px;
`
